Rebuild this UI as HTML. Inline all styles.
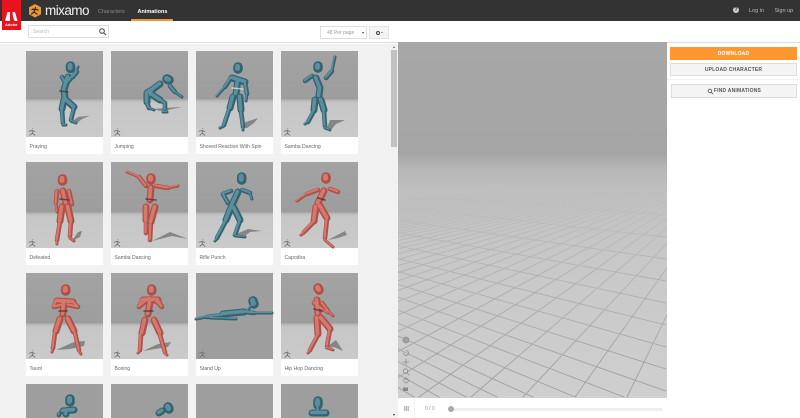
<!DOCTYPE html>
<html><head><meta charset="utf-8"><title>Mixamo</title>
<style>
*{box-sizing:border-box}
html,body{margin:0;padding:0;width:800px;height:418px;overflow:hidden;background:#fff;font-family:"Liberation Sans",sans-serif}
#w{position:relative;width:800px;height:418px;overflow:hidden;filter:blur(.3px)}
.a{position:absolute}
.c{position:absolute;width:77px;height:103px;background:#fff}
.c i{display:block;height:86px}
.c span{position:absolute;left:3.500px;top:92.500px;font-size:5.100px;line-height:7px;color:#666;white-space:nowrap}
.r1 i{background:linear-gradient(#a3a3a3 0,#9d9d9d 48px,#b4b4b4 49px,#c6c6c6 52px,#cacaca 100%)}
.r2 i{background:linear-gradient(#a3a3a3 0,#9d9d9d 50px,#b4b4b4 51px,#c6c6c6 54px,#cacaca 100%)}
.su i{background:#9e9e9e}
.s4{height:34px;overflow:hidden}
.s4 i{height:34px}
.b{position:absolute;font-size:5px;font-weight:bold;text-align:center;letter-spacing:.2px}
svg path{fill:none;stroke-linecap:round;stroke-linejoin:round}
.t{stroke-width:var(--t)}.m{stroke-width:var(--m)}.n{stroke-width:var(--n)}.h{stroke-width:var(--h)}
.tb{--t:7;--m:4.6;--n:3;--h:9.500;stroke:#34626f}
.th{--t:3.600;--m:2.200;--n:1.300;--h:5;stroke:#5b8e9f}
.rb{--t:7;--m:4.6;--n:3;--h:9.500;stroke:#ac5049}
.rh{--t:3.600;--m:2.200;--n:1.300;--h:5;stroke:#d6786c}
</style></head><body><div id="w">

<!-- header -->
<div class="a" style="left:0;top:0;width:800px;height:21px;background:#333"></div>
<div class="a" style="left:0;top:21px;width:800px;height:22px;background:#fff;border-bottom:1px solid #ddd"></div>
<div class="a" style="left:2px;top:0;width:18.5px;height:30px;background:#e8131c"></div>
<svg class="a" style="left:2px;top:0" width="19" height="30"><polygon points="5.5,12 8,12 8,21 3,21" fill="#fff"/><polygon points="10.500,12 13,12 15.500,21 12.500,21 11,17" fill="#fff"/></svg>
<div class="a" style="left:2px;top:22px;width:18.500px;text-align:center;font-size:4px;font-weight:bold;color:#fff;line-height:5px">Adobe</div>
<svg class="a" style="left:28px;top:3px" width="15" height="16"><polygon points="7,1 13,4.200 13,11.200 7,14.500 1,11.200 1,4.200" fill="#e8973a"/><path d="M7.500 4.500v.5M7 6L6 9 3.500 11M6 9l3 2M4 6.500L7 6l3 1" stroke="#3a2a18" stroke-width="1.200"/></svg>
<div class="a" style="left:45px;top:2px;font-size:13.500px;line-height:18px;color:#f2f2f2;letter-spacing:-.55px">mixamo</div>
<div class="a" style="left:98px;top:8px;font-size:5.500px;line-height:8px;color:#8a8a8a">Characters</div>
<div class="a" style="left:137.500px;top:8px;font-size:5.500px;line-height:8px;color:#fff;font-weight:bold">Animations</div>
<div class="a" style="left:131px;top:19px;width:41.500px;height:2px;background:#e8973a"></div>
<div class="a" style="left:733px;top:7px;width:6px;height:6px;border-radius:50%;background:#ccc;font-size:5px;line-height:6px;text-align:center;color:#333;font-weight:bold">?</div>
<div class="a" style="left:749px;top:8px;font-size:5.500px;line-height:7px;color:#bbb">Log in</div>
<div class="a" style="left:774.500px;top:8px;font-size:5.500px;line-height:7px;color:#bbb">Sign up</div>

<!-- toolbar -->
<div class="a" style="left:28px;top:25px;width:81px;height:13px;background:#fff;border:1px solid #ddd"></div>
<div class="a" style="left:33px;top:29px;font-size:5px;line-height:7px;color:#bbb">Search</div>
<svg class="a" style="left:98px;top:27px" width="9" height="9"><circle cx="4" cy="4" r="2.300" fill="none" stroke="#444" stroke-width="1"/><path d="M5.800 5.800L7.800 7.800" stroke="#444" stroke-width="1"/></svg>
<div class="a" style="left:320px;top:26px;width:47px;height:13px;background:#fff;border:1px solid #ddd"></div>
<div class="a" style="left:327px;top:29.500px;font-size:5px;line-height:7px;color:#999;white-space:nowrap">48 Per page</div>
<div class="a" style="left:361.500px;top:31.500px;width:0;height:0;border:1.500px solid transparent;border-top:2px solid #444;border-bottom:0"></div>
<div class="a" style="left:369px;top:25.500px;width:20px;height:13px;background:#f4f4f4;border:1px solid #e4e4e4"></div>
<div class="a" style="left:375.500px;top:30.500px;width:4px;height:4px;border-radius:50%;border:1.200px solid #444"></div>
<div class="a" style="left:380.500px;top:32px;width:0;height:0;border:1.200px solid transparent;border-top:1.500px solid #444;border-bottom:0"></div>

<!-- left list -->
<div class="a" style="left:0;top:44px;width:398px;height:374px;background:#f2f2f2"></div>
<div class="a" style="left:390px;top:44px;width:8px;height:374px;background:#f1f1f1"></div>
<div class="a" style="left:391px;top:50px;width:6px;height:97px;background:#c2c2c2"></div>
<div class="a" style="left:392.500px;top:46px;width:0;height:0;border:1.500px solid transparent;border-bottom:2px solid #666;border-top:0"></div>
<div class="a" style="left:392.500px;top:414px;width:0;height:0;border:1.500px solid transparent;border-top:2px solid #333;border-bottom:0"></div>

<div class="c r1" style="left:26px;top:51px"><i></i><span>Praying</span></div>
<div class="c r1" style="left:111px;top:51px"><i></i><span>Jumping</span></div>
<div class="c r1" style="left:196px;top:51px"><i></i><span>Shoved Reaction With Spin</span></div>
<div class="c r1" style="left:281px;top:51px"><i></i><span>Samba Dancing</span></div>
<div class="c r2" style="left:26px;top:162px"><i></i><span>Defeated</span></div>
<div class="c r2" style="left:111px;top:162px"><i></i><span>Samba Dancing</span></div>
<div class="c r2" style="left:196px;top:162px"><i></i><span>Rifle Punch</span></div>
<div class="c r2" style="left:281px;top:162px"><i></i><span>Capodira</span></div>
<div class="c r2" style="left:26px;top:273px"><i></i><span>Taunt</span></div>
<div class="c r2" style="left:111px;top:273px"><i></i><span>Boxing</span></div>
<div class="c su" style="left:196px;top:273px"><i></i><span>Stand Up</span></div>
<div class="c r2" style="left:281px;top:273px"><i></i><span>Hip Hop Dancing</span></div>
<div class="c su s4" style="left:26px;top:384px"><i></i></div>
<div class="c su s4" style="left:111px;top:384px"><i></i></div>
<div class="c su s4" style="left:196px;top:384px"><i></i></div>
<div class="c su s4" style="left:281px;top:384px"><i></i></div>

<!-- figures -->
<svg class="a" style="left:0;top:0" width="390" height="418" viewBox="0 0 390 418">
<defs>
<g id="r"><path d="M.8-3.300v.3M-3-.8L0-1.600 2.800-.4M0-1.600L.5 1-2.200 3.300M.5 1L2.800 3.300" stroke="#6f6f6f" stroke-width=".8"/></g>
<g id="f1"><path class="h" d="M70.500 66v2.500"/><path class="t" d="M68 77L64 90 65 99M66 100L74 107M64 100L62 109"/><path class="m" d="M62 77L66 84 75 74M71 120L74 108M62 109L63 123M73 77l4-5"/><path class="n" d="M71 121l5 2M63 125h3M75 74l3-7"/></g>
<g id="f2"><path class="h" d="M167 79l2 1"/><path class="t" d="M160 84L152 90 147 93M147 94L147 102M151 94L160 100"/><path class="m" d="M170 86L175 92M147 103L149 108M160 100L165 103 165 110"/><path class="n" d="M175 92L182 97M149 108l5 2M163 112h4M155 88L150 96"/></g>
<g id="f3"><path class="h" d="M238 67v2"/><path class="t" d="M232 78L245 82M238 80L236 94M233 97L230 108M240 97L241 110"/><path class="m" d="M231 78L225 87M245 82L247 94M229 110L224 125M241 111L243 126"/><path class="n" d="M225 87L217 96M247 94L246 101M224 126l-4 2M243 127v3"/></g>
<g id="f4"><path class="h" d="M318 66v2"/><path class="t" d="M316 78L320 88 319 96M315 100L314 110M321 100L324 110"/><path class="m" d="M326 78L332 71M312 76L305 81M314 111L308 122M324 111L325 126"/><path class="n" d="M332 71L335 57M308 122l-3 2M325 128l5 2"/></g>
<g id="f5"><path class="h" d="M62.500 179v2"/><path class="t" d="M63 191L66 203M62 207L60 221M68 207L71 221"/><path class="m" d="M57 191L56 203M69 191L72 204M60 222L57 240M71 222L70 236"/><path class="n" d="M56 203L57 212M57 241v3M70 238l4 3"/></g>
<g id="f6"><path class="h" d="M151 178v2"/><path class="t" d="M151 188L150 200M146 207L146 220M155 207L151 222"/><path class="m" d="M146 186L139 177M156 186L168 188M146 221L146 233M151 222L150 240"/><path class="n" d="M139 177L127 172M168 188L178 186"/></g>
<g id="f7"><path class="h" d="M241.700 177v3"/><path class="t" d="M238 192L232 205M231 208L226 220M234 208L240 220"/><path class="m" d="M231 191L223 194 228 203M242 190L250 193M226 221L217 238M240 221L235 235"/><path class="n" d="M250 193L252 199M217 239l-2 2M236 236l9 1"/></g>
<g id="f8"><path class="h" d="M326 177v2"/><path class="t" d="M324 191L318 203M316 207L314 221M320 206L327 218"/><path class="m" d="M318 190L307 194M330 189L338 192M314 222L304 232M327 219L325 238"/><path class="n" d="M307 194L297 201M304 233l-3 2M325 240l8 7"/></g>
<g id="f9"><path class="h" d="M65.700 289v2"/><path class="t" d="M57 301L73 302M64 303L63 314M60 319L56 331M68 319L74 331"/><path class="m" d="M56 301L54 307 63 305M73 302L78 307 68 305M55 333L53 348M75 333L79 350"/><path class="n" d="M53 349l-1 3M79 351l2 3"/></g>
<g id="f10"><path class="h" d="M151.700 289v2"/><path class="t" d="M143 300L158 300M150 302L148 314M145 320L142 333M154 320L160 333"/><path class="m" d="M142 300L139 307 150 298M158 300L162 307 154 299M141 335L140 350M160 335L165 352"/><path class="n" d="M140 351l-2 2M165 353l2 2"/></g>
<g id="f11"><path class="h" d="M253 301l1 3"/><path class="t" d="M223 314L233 313 244 312"/><path class="m" d="M207 317L223 315M244 312L254 313"/><path class="n" d="M196 319L207 317M254 313L272 313M247 311L253 304M210 318L236 319"/></g>
<g id="f12"><path class="h" d="M318 288l1 2"/><path class="t" d="M317 300L318 314M321 318L330 329M317 318L318 334"/><path class="m" d="M322 303L328 311M314 303L322 309M330 330L327 346M318 335L310 350"/><path class="n" d="M328 311L333 316M322 309L328 313M327 348l6 2M310 351l-2 2"/></g>
<g id="f13"><path class="h" d="M70 399v3"/><path class="t" d="M63 411L74 410M66 412v2"/><path class="m" d="M59 414v1"/></g>
<g id="f14"><path class="h" d="M168 407l1 2"/><path class="t" d="M162 411L159 413"/></g>
<g id="f16"><path class="h" d="M318 401v4"/><path class="t" d="M312 413L326 413"/><path class="m" d="M318 408v4"/></g>
</defs>

<g fill="#858585">
<polygon points="70,123 78,117 90,115.500 82,119 76,124"/>
<polygon points="153,109 165,108 182,107 168,110 160,111"/>
<polygon points="240,128 246,122 258,118 254,123 247,128"/>
<polygon points="327,128 330,120 345,120 336,124 331,130"/>
<polygon points="72,241 78,232 82,231 80,237"/>
<polygon points="152,241 170,232 188,239 172,236"/>
<polygon points="236,234 248,229 262,231 250,232 243,237"/>
<polygon points="328,240 345,231 347,235 338,238"/>
<polygon points="56,350 74,342 85,341 84,346 70,349"/>
<polygon points="143,351 158,344 171,342 168,347 155,349"/>
<polygon points="324,349 336,340 343,351 334,347"/>
</g>

<g class="tg">
<use href="#f1" class="tb"/><use href="#f1" class="th" transform="translate(-.5,-.6)"/>
<use href="#f2" class="tb"/><use href="#f2" class="th" transform="translate(-.5,-.6)"/>
<use href="#f3" class="tb"/><use href="#f3" class="th" transform="translate(-.5,-.6)"/>
<use href="#f4" class="tb"/><use href="#f4" class="th" transform="translate(-.5,-.6)"/>
<use href="#f7" class="tb"/><use href="#f7" class="th" transform="translate(-.5,-.6)"/>
<use href="#f11" class="tb"/><use href="#f11" class="th" transform="translate(-.5,-.6)"/>
<use href="#f13" class="tb"/><use href="#f13" class="th" transform="translate(-.5,-.6)"/>
<use href="#f14" class="tb"/><use href="#f14" class="th" transform="translate(-.5,-.6)"/>
<use href="#f16" class="tb"/><use href="#f16" class="th" transform="translate(-.5,-.6)"/>
<use href="#f5" class="rb"/><use href="#f5" class="rh" transform="translate(-.5,-.6)"/>
<use href="#f6" class="rb"/><use href="#f6" class="rh" transform="translate(-.5,-.6)"/>
<use href="#f8" class="rb"/><use href="#f8" class="rh" transform="translate(-.5,-.6)"/>
<use href="#f9" class="rb"/><use href="#f9" class="rh" transform="translate(-.5,-.6)"/>
<use href="#f10" class="rb"/><use href="#f10" class="rh" transform="translate(-.5,-.6)"/>
<use href="#f12" class="rb"/><use href="#f12" class="rh" transform="translate(-.5,-.6)"/>
</g>
<path stroke="#3a2f30" stroke-opacity=".7" stroke-width="1.600" d="M60 91l8 1M60 199l9 1M146 199l10 1M318 198l7 2M59 311l8 0M144 311l9 0M314 309l8 2"/>
<path stroke="#dfe8ea" stroke-opacity=".7" stroke-width="1.400" d="M232 88l11 1"/>
<use href="#r" x="32" y="132"/><use href="#r" x="117" y="132"/><use href="#r" x="202" y="132"/><use href="#r" x="287" y="132"/>
<use href="#r" x="32" y="243"/><use href="#r" x="117" y="243"/><use href="#r" x="202" y="243"/><use href="#r" x="287" y="243"/>
<use href="#r" x="32" y="354"/><use href="#r" x="117" y="354"/><use href="#r" x="202" y="354"/><use href="#r" x="287" y="354"/>
</svg>

<!-- viewer -->
<div class="a" style="left:398px;top:42px;width:268.500px;height:356px;background:linear-gradient(#a7a7a7 0,#a5a5a5 112px,#b6b6b6 126px,#c0c0c0 150px,#c8c8c8 220px,#cfcfcf 100%)"></div>
<svg class="a" style="left:398px;top:150px" width="269" height="248" viewBox="398 150 269 248">
<defs><linearGradient id="g" gradientUnits="userSpaceOnUse" x1="0" y1="185" x2="0" y2="398"><stop offset="0" stop-color="#a8a8a8" stop-opacity="0"/><stop offset=".4" stop-color="#a8a8a8" stop-opacity=".7"/><stop offset="1" stop-color="#9c9c9c"/></linearGradient></defs>
<path stroke="url(#g)" stroke-width=".9" d="M740 165L627 397M740 165L575 397M740 165L523 397M740 165L471 397M740 165L419 397M740 165L367 397M740 165L315 397M740 165L263 397M740 165L211 397M740 165L159 397M740 165L107 397M740 165L55 397M740 165L3 397M740 165L-49 397M740 165L-101 397M740 165L-153 397M740 165L-205 397M740 165L-257 397M740 165L-309 397M740 165L-361 397M740 165L-413 397M740 165L-465 397M740 165L-517 397M740 165L-569 397M740 165L-621 397M740 165L-673 397M740 165L-725 397M740 165L-777 397M740 165L-829 397M740 165L-881 397M740 165L-933 397M740 165L-985 397M740 165L-1037 397M740 165L-1089 397M740 165L-1141 397M740 165L-1193 397M740 165L-1245 397M740 165L-1297 397M740 165L-1349 397M740 165L-1401 397M740 165L-1453 397M740 165L-1505 397
M20 165L666 193M20 165L666 215M20 165L666 237M20 165L666 259M20 165L666 281M20 165L666 303M20 165L666 325M20 165L666 347M20 165L666 369M20 165L666 391M20 165L624 397M20 165L575 397M20 165L533 397M20 165L497 397M20 165L466 397M20 165L439 397M20 165L414 397M20 165L393 397M20 165L373 397"/>
<g stroke="#8f8f8f" stroke-width=".8"><circle cx="406" cy="340" r="3" fill="#a0a0a0"/>
<path d="M403.500 353a2.500 2.500 0 1 0 2.500-2.500M406 359v6M403 362h6"/>
<circle cx="405.500" cy="371" r="2.200" fill="none"/><path d="M407 373l2 2"/>
<circle cx="406" cy="380.500" r="2.300" fill="none"/><path d="M406 377v3"/></g>
<rect x="403" y="387.500" width="5" height="3.500" fill="#888"/>
</svg>
<div class="a" style="left:398px;top:398px;width:269px;height:20px;background:#fff"></div>
<div class="a" style="left:414px;top:398px;width:1px;height:20px;background:#f0f0f0"></div>
<div class="a" style="left:403.500px;top:405.500px;width:5.500px;height:5px;background:repeating-linear-gradient(90deg,#bbb 0 1.400px,#fff 1.400px 2px)"></div>
<div class="a" style="left:425px;top:405.500px;font-size:5px;line-height:7px;color:#999;white-space:nowrap">0 / 0</div>
<div class="a" style="left:451px;top:407.500px;width:211px;height:3px;background:#eee"></div>
<div class="a" style="left:448px;top:406px;width:6px;height:6px;border-radius:50%;background:#aaa"></div>

<!-- right panel -->
<div class="a" style="left:666.500px;top:43px;width:133.500px;height:375px;background:#fff"></div>
<div class="b" style="left:670px;top:46.500px;width:127px;height:13.500px;line-height:14px;background:#ff9730;color:#fff">DOWNLOAD</div>
<div class="b" style="left:670px;top:62.500px;width:127px;height:13.500px;line-height:12px;background:#f4f4f4;border:1px solid #ddd;color:#555">UPLOAD CHARACTER</div>
<div class="a" style="left:667px;top:79px;width:133px;height:1px;background:#f0f0f0"></div>
<div class="b" style="left:671px;top:84px;width:126px;height:14px;line-height:12.500px;background:#f4f4f4;border:1px solid #ddd;color:#555;padding-left:7px">FIND ANIMATIONS</div>
<svg class="a" style="left:706.500px;top:87.500px" width="7" height="7"><circle cx="3" cy="3" r="1.800" fill="none" stroke="#555" stroke-width=".8"/><path d="M4.300 4.300L6 6" stroke="#555" stroke-width=".8"/></svg>

</div></body></html>
